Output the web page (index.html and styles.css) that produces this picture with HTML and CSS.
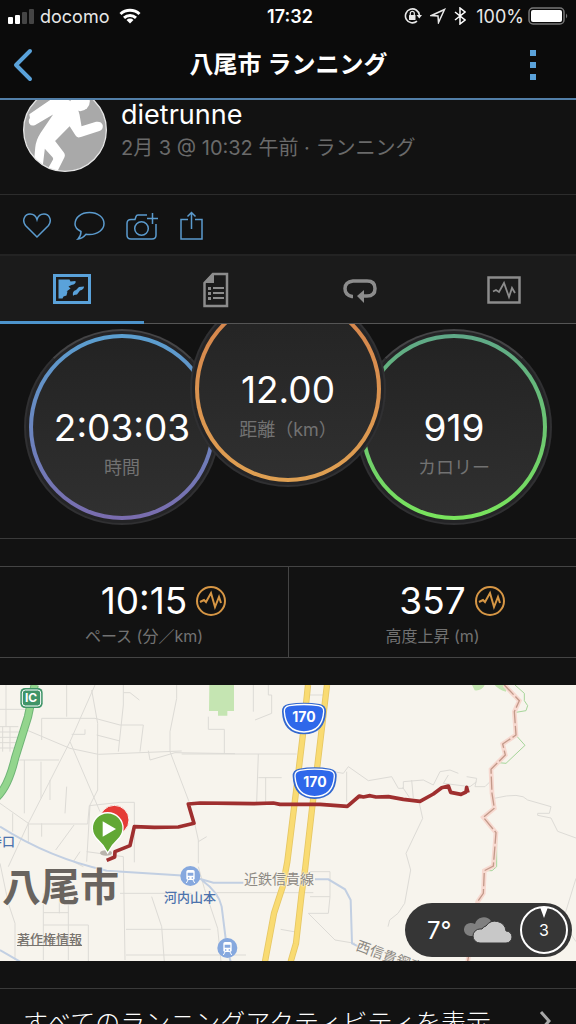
FILE: index.html
```html
<!DOCTYPE html>
<html lang="ja">
<head>
    <meta charset="UTF-8">
    <meta name="viewport" content="width=device-width, initial-scale=1.0">
    <title>八尾市 ランニング</title>
    <link rel="stylesheet" href="styles.css">
</head>
<body>

<!-- Status bar -->
<div class="status">
    <div class="status-left">
        <svg width="27" height="16" viewBox="0 0 27 16">
            <rect x="0" y="9" width="5" height="7" rx="1" fill="#fff"/>
            <rect x="7" y="7" width="5" height="9" rx="1" fill="#fff"/>
            <rect x="14" y="4" width="5" height="12" rx="1" fill="#454545"/>
            <rect x="21" y="1" width="5" height="15" rx="1" fill="#454545"/>
        </svg>
        <span class="carrier">docomo</span>
        <svg width="22" height="16" viewBox="0 0 22 16" fill="none" stroke="#fff" stroke-width="3">
            <path d="M1.5 6a14 14 0 0 1 19 0"/>
            <path d="M5 9.8a9 9 0 0 1 12 0"/>
            <path d="M11 15.5L7.5 12a5 5 0 0 1 7 0z" fill="#fff" stroke="none"/>
        </svg>
    </div>
    <b class="clock">17:32</b>
    <div class="status-right">
        <svg width="18" height="18" viewBox="0 0 18 18" fill="none" stroke="#e8e8e8" stroke-width="1.6">
            <path d="M13 14.2A7 7 0 1 1 15.4 8"/>
            <path d="M12.5 8H18l-2.7 3.5z" fill="#e8e8e8" stroke="none"/>
            <rect x="5" y="8" width="6.5" height="5" rx="0.5" fill="#e8e8e8" stroke="none"/>
            <path d="M6.3 8V6.300a2 2 0 0 1 4 0V8" stroke-width="1.2"/>
        </svg>
        <svg class="arrow" width="16" height="16" viewBox="0 0 16 16" fill="none" stroke="#e8e8e8" stroke-width="1.5">
            <path d="M14.5 1.5L1.5 7.5l6.5.5.5 6.5z"/>
        </svg>
        <svg class="bluetooth" width="12" height="18" viewBox="0 0 12 18" fill="none" stroke="#fff" stroke-width="1.5">
            <path d="M1 5l10 8-5 4V1l5 4-10 8"/>
        </svg>
        <span>100%</span>
        <svg width="40" height="18" viewBox="0 0 40 18">
            <rect x="1" y="1" width="35" height="16" rx="4" fill="none" stroke="#777" stroke-width="1.5"/>
            <rect x="3" y="3" width="31" height="12" rx="2" fill="#fff"/>
            <path d="M38 6.5q2.5 2.500 0 5z" fill="#777"/>
        </svg>
    </div>
</div>

<header class="topbar">
    <button class="back" aria-label="戻る">
        <svg width="20" height="34" viewBox="0 0 20 34" fill="none" stroke="#5aa2da" stroke-width="4" stroke-linecap="round" stroke-linejoin="round">
            <path d="M17 3L3 17l14 14"/>
        </svg>
    </button>
    <h1>八尾市 ランニング</h1>
    <button class="more" aria-label="メニュー">
        <svg width="6" height="32" viewBox="0 0 6 32" fill="#5aa2da">
            <rect width="6" height="6" y="1"/>
            <rect width="6" height="6" y="13"/>
            <rect width="6" height="6" y="25"/>
        </svg>
    </button>
</header>

<main>
    <section class="profile">
        <svg class="avatar" viewBox="15 -25 254 254">
            <defs>
                <clipPath id="round"><circle cx="142" cy="102" r="125"/></clipPath>
            </defs>
            <circle cx="142" cy="102" r="125" fill="#a9a9a9"/>
            <g clip-path="url(#round)" fill="#fff">
                <circle cx="188" cy="16" r="29"/>
                <path d="M34 54L96 12q10-6 22-6l30 4q32 8 38 46l6 35 44-14q16-2 20 10 2 14-10 18l-56 18q-12 4-16-4l-18-28-44 44 26 34q6 8 2 16l-26 52-26-14 17-30q3-6-2-10l-22-24-8 66-26-12 5-58q2-22 16-44l38-56-54 32q-12 5-18-5-4-10 2-16z"/>
            </g>
            <circle cx="142" cy="102" r="125" fill="none" stroke="#e6e6e6" stroke-width="4"/>
        </svg>
        <div>
            <div class="name">dietrunne</div>
            <div class="date">2月 3 @ 10:32 午前 · ランニング</div>
        </div>
    </section>

    <div class="actions">
        <button aria-label="いいね">
            <svg width="30" height="30" viewBox="0 0 30 30"><path d="M15 27L3.5 15.500C-.5 10 3 4 8 4c3.500 0 6 2 7 5.500C16 6 18.500 4 22 4c5 0 8.500 6 4.500 11.500z"/></svg>
        </button>
        <button aria-label="コメント">
            <svg width="32" height="30" viewBox="0 0 32 30"><path d="M8 21.5C4 19.500 2 17 2 14 2 7.500 8 2.500 16.500 2.500S31 7.500 31 13.500 25 24.500 16.500 24.500q-2 0-3.500-.3Q9.500 28.500 5 29q3-3 3-7.500z"/></svg>
        </button>
        <button aria-label="写真を追加">
            <svg width="32" height="30" viewBox="0 0 32 30">
                <path d="M21 5h-9q-1.500 0-2 1.500L9 9.500H5q-4 0-4 4V25q0 4 4 4h21q4 0 4-4V14"/>
                <circle cx="15.5" cy="18.5" r="6.8"/>
                <path d="M26.5 3v11M21 8.500h11"/>
            </svg>
        </button>
        <button aria-label="共有">
            <svg width="24" height="30" viewBox="0 0 24 30"><path d="M9 9.500H2V29h21V9.500h-7M12.500 19V2.500M8.500 6.500l4-4 4 4"/></svg>
        </button>
    </div>

    <nav class="tabs">
        <a href="#map" class="active" aria-label="地図">
            <svg width="38" height="30" viewBox="0 0 38 30">
                <rect x="1.5" y="1.5" width="35" height="27" fill="none" stroke="#5aa2da" stroke-width="3"/>
                <path d="M5.500 5.500h11l1 2 5-.5q1 3-4 4l-3 1.500 2 2-4 3h1l-1 4-3 1-1 2h-4zM20 22q-1-5 3-6l3-3 5-.5q0 3-4 4l-3 4-3 .5z" fill="#5aa2da"/>
            </svg>
        </a>
        <a href="#details" aria-label="詳細">
            <svg width="26" height="36" viewBox="0 0 26 36" fill="#8c8c8c">
                <path d="M10 2h14v32H1.500V11z" fill="none" stroke="#8c8c8c" stroke-width="2.5"/>
                <path d="M1 11L9 1.500h2V11z"/>
                <path d="M5 15h3v3H5zM10 15h11v2H10zM5 20h3v3H5zM10 20h11v2H10zM5 25h3v3H5zM10 25h11v2H10z"/>
            </svg>
        </a>
        <a href="#laps" aria-label="ラップ">
            <svg width="36" height="26" viewBox="0 0 36 26">
                <path d="M11 19.500h-1Q3 18 3 11.500T11 4h14q8 0 8 7.500T25 19h-4" fill="none" stroke="#8c8c8c" stroke-width="3.5"/>
                <path d="M15 19L22 13v13z" fill="#8c8c8c"/>
            </svg>
        </a>
        <a href="#charts" aria-label="グラフ">
            <svg width="34" height="28" viewBox="0 0 34 28" fill="none" stroke="#8c8c8c">
                <rect x="1.5" y="1.5" width="31" height="25" stroke-width="2.5"/>
                <path d="M6 15.500l3-1.500 3 2L17 7l5 14L25 12l3 5" stroke-width="1.8"/>
            </svg>
        </a>
    </nav>

    <section class="gauges">
        <div class="gauge blue">
            <div class="ring">
                <span class="value">2:03:03</span>
                <span class="label">時間</span>
            </div>
        </div>
        <div class="gauge orange">
            <div class="ring">
                <span class="value">12.00</span>
                <span class="label">距離（km）</span>
            </div>
        </div>
        <div class="gauge green">
            <div class="ring">
                <span class="value">919</span>
                <span class="label">カロリー</span>
            </div>
        </div>
    </section>

    <section class="stats">
        <div class="stat">
            <div class="stat-row">
                <span class="value">10:15</span>
                <svg class="pulse" viewBox="0 0 30 30"><circle cx="15" cy="15" r="14"/><path d="M4 16l4-2 2 2 5-9 4 14 4-10 2 6"/></svg>
            </div>
            <div class="label">ペース (分／km)</div>
        </div>
        <div class="stat">
            <div class="stat-row">
                <span class="value">357</span>
                <svg class="pulse" viewBox="0 0 30 30"><circle cx="15" cy="15" r="14"/><path d="M4 16l4-2 2 2 5-9 4 14 4-10 2 6"/></svg>
            </div>
            <div class="label">高度上昇 (m)</div>
        </div>
    </section>

    <section class="map" id="map">
        <svg class="map-canvas" viewBox="0 15 1728 828" preserveAspectRatio="xMinYMin slice" fill="none">
            <!-- parks -->
            <path d="M628 15h74v78h-20v14h-28V93h-27z" fill="#c5e5b2"/>
            <path d="M1416 15h38q-8 18-30 16zM1484 15h34v20q-20-4-34-20z" fill="#c5e5b2"/>

            <!-- small roads -->
            <g stroke="#dddbd6" stroke-width="3">
                <path d="M285 15L210 185 85 430 25 560M275 30l18 100v200l-23 45-10 170M210 185l90 210M80 150l130 55 85 18 250-10M0 88h90M200 15v95M18 15v125M0 140h55M0 156h60M0 172h60M0 188h60M0 204h60M30 140v75M8 140v75M125 180v-65h160l75 20h70l-10 80M370 15v60l-15 140M370 38h20l28 22M290 165l70 18M215 163h40v-15M55 240h122M73 240v160M123 245v110M200 320l-5 80M150 300v60"/>
                <path d="M530 15v40l-20 100v60l57 150M445 212l5 28 75-22 180 3M0 370l88 62h175l5-55 92-10h43v180M125 430v40M222 435l-55 75M38 400v55M85 430v60M260 515l110 15 5 310M0 550l25 120 20 60v110M130 640v200M178 640v60M205 640v200M265 735v110M130 698h75M130 735h135M360 640h215M378 748h254M378 825h360M455 650l30 90 8 105M240 515l-20 30 30 15"/>
                <path d="M625 110v38h48v74M545 222h345M775 222l-5 145M775 293h70M797 293v75M805 15v30h10v55l-50 20M760 15v80M585 435l10 45v70M595 485l25-15M595 560l18 65 40 120 10 100M650 638h290M930 650h60v-75h-60M925 700h60l5-50M925 700l80 80 60 10M842 748l45 8M930 45h40"/>
                <path d="M1000 275l30 5 15-20 60 42 70-12 20 35h15v-20l60-5 30 15 20-40 30-5 25 10M1040 365v-90M1258 370l10 45-50 105 14 50-18 100-20 30-25 20-5 20M1483 355q80-20 100 5l70 20-5 20h-35v6l40 8 20 40 55 20M1728 595l-40 130 40 60M1345 285l-15 25 80 10 20-15M1400 290l30 5-5 25h30l20-20M1208 322l20 30M1235 300l5 55"/>
            </g>

            <!-- railways -->
            <g stroke="#c2cfe2" stroke-width="6">
                <path d="M0 440q150 95 320 132l250 16 70 20h90M945 598h40l50 30 17 32 4 130 20 10M605 600q52 38 60 80l15 120 12 45M0 810l60 35"/>
            </g>

            <!-- expressway and route 170 -->
            <path d="M104 15L84 110 45 235Q25 320-10 352" stroke="#6fb476" stroke-width="25"/>
            <path d="M104 15L84 110 45 235Q25 320-10 352" stroke="#93d58d" stroke-width="19"/>
            <g stroke="#e6c765" stroke-width="19">
                <path d="M924 15l-16 155-18 150-28 225-14 75-26 80-27 145M981 15l-28 235-15 120-23 200-10 70-17 150-16 55"/>
            </g>
            <g stroke="#f9db72" stroke-width="14">
                <path d="M924 15l-16 155-18 150-28 225-14 75-26 80-27 145M981 15l-28 235-15 120-23 200-10 70-17 150-16 55"/>
            </g>

            <!-- prefecture border -->
            <path d="M1545 15l28 25v22l10 15-5 15-30 5M1550 168l25 28-57 54-22-2M1490 460v100l-14 12h-16" stroke="#a6d59a" stroke-width="3"/>
            <path d="M1513 15l45 47-15 33 5 70-40 27 8 33-43 43 3 72 7 45-33 27 38 46-8 100-27 14-3 68-17 25-30 180" stroke="#f7d9d0" stroke-width="14"/>
            <path d="M1513 15l45 47-15 33 5 70-40 27 8 33-43 43 3 72 7 45-33 27 38 46-8 100-27 14-3 68-17 25-30 180" stroke="#c49a8a" stroke-width="4" stroke-dasharray="40 8"/>

            <!-- run track -->
            <path d="M320 541L344 531 345 515 390 497 403 440 463 442 535 441 582 430 565 372 600 369 700 370 760 371 820 369 840 373 960 373 1042 379 1078 348 1090 351 1110 347 1128 351 1165 350 1210 358 1260 364 1300 342 1325 323 1345 318 1352 337 1383 343 1398 336 1400 322 1404 338" stroke="#9f2f2f" stroke-width="11" stroke-linejoin="round"/>

            <!-- finish and start pins -->
            <circle cx="343" cy="420" r="44" fill="#e53b36" stroke="#faf3ee" stroke-width="3"/>
            <ellipse cx="318" cy="519" rx="18" ry="8" fill="#b9b4ac"/>
            <path d="M323 519q-12-24-30-40a46 46 0 1 1 60 0q-18 16-30 40z" fill="#62a834" stroke="#fff" stroke-width="4"/>
            <path d="M308 424v46l40-23z" fill="#fff"/>

            <!-- stations -->
            <g id="station">
                <circle cx="571" cy="588" r="30" fill="#86a8de"/>
                <rect x="559" y="570" width="25" height="30" rx="5" fill="#fff"/>
                <path d="M563 578h17v9h-17zM564 592h4v4h-4zM575 592h4v4h-4z" fill="#86a8de"/>
                <path d="M564 600l-5 9M579 600l5 9" stroke="#fff" stroke-width="3"/>
            </g>
            <use href="#station" x="111" y="216"/>

            <!-- road shields -->
            <rect x="61" y="24" width="67" height="60" rx="14" fill="#3f9468"/>
            <rect x="67" y="30" width="55" height="48" rx="9" stroke="#fff" stroke-width="3"/>
            <g id="shield">
                <path d="M865 72q47-8 94 0 20 4 19 23-2 66-66 68-64-2-66-68-1-19 19-23z" fill="#3368cf"/>
                <path d="M868 77q44-7 88 0 16 3 15 18-4 60-59 61-55-1-59-61-1-15 15-18z" fill="#2f68ea" stroke="#fff" stroke-width="4"/>
            </g>
            <use href="#shield" x="32" y="194"/>
        </svg>

        <span class="place city">八尾市</span>
        <span class="place station-name kyuhoji">久宝寺口</span>
        <span class="place station-name yamamoto">河内山本</span>
        <span class="place line-name shigi">近鉄信貴線</span>
        <span class="place line-name cable">西信貴鋼索線</span>
        <span class="place sign ic">IC</span>
        <span class="place sign route-a">170</span>
        <span class="place sign route-b">170</span>
        <a class="legal" href="#legal">著作権情報</a>

        <div class="weather">
            <span class="temp">7°</span>
            <svg width="48" height="28" viewBox="0 0 48 28">
                <path d="M6 20a6 6 0 0 1 1-13q2 0 4 1a9 9 0 0 1 16-3l-8 10-8 5z" fill="#808080"/>
                <path d="M16 27a7 7 0 0 1 0-14l2 0a6 6 0 0 1 4-3 11 11 0 0 1 20 5 6 6 0 0 1 0 12z" fill="#c8c8c8" stroke="#363636"/>
            </svg>
            <div class="wind">
                <svg width="50" height="50" viewBox="0 0 50 50">
                    <circle cx="25" cy="25" r="23" fill="none" stroke="#fff" stroke-width="2"/>
                    <path d="M21 2h8l-4 11z" fill="#fff"/>
                </svg>
                <span>3</span>
            </div>
        </div>
    </section>

    <a class="all-link" href="#all">
        <span>すべてのランニングアクティビティを表示</span>
        <svg width="12" height="20" viewBox="0 0 12 20" fill="none" stroke="#a8a8a8" stroke-width="3"><path d="M2 1l8 9-8 9"/></svg>
    </a>
</main>

</body>
</html>
```
FILE: styles.css
```css
* {
    box-sizing: border-box;
}

body {
    margin: 0;
    height: 100vh;
    display: flex;
    flex-direction: column;
    overflow: hidden;
    background-color: #121212;
    color: white;
    font-family: Inter, "Noto Sans CJK JP", sans-serif;
}

svg { display: block; }

button {
    padding: 0;
    border: none;
    background: none;
    cursor: pointer;
}

/* Status bar */
.status {
    flex: none;
    display: grid;
    grid-template-columns: 1fr auto 1fr;
    align-items: center;
    height: 32px;
    padding: 0 8px;
    background-color: #0b0b0b;
    color: #e8e8e8;
    font-size: 18px;
}

.status-left, .status-right {
    display: flex;
    align-items: center;
    gap: 4px;
}

.status-left { gap: 5px; }
.status-right { justify-content: flex-end; }
.carrier { margin-right: 5px; }
.clock { padding-left: 4px; font-weight: 600; color: white; }
.arrow { margin: 0 4px; }
.bluetooth { margin-right: 6px; }

.topbar {
    flex: none;
    display: flex;
    align-items: center;
    justify-content: space-between;
    height: 68px;
    padding: 0 40px 0 13px;
    background-color: #0b0b0b;
    border-bottom: 2px solid #527fa8;
}

.topbar button { width: 20px; }
.topbar .more { width: 6px; }

h1 {
    margin: 0;
    padding-left: 14px;
    font-size: 24px;
    font-weight: 600;
    line-height: 36px;
}

main {
    flex: 1;
    overflow: hidden;
}

/* Profile */
.profile {
    display: flex;
    gap: 14px;
    height: 95px;
    padding-left: 23px;
    border-bottom: 1px solid #2c2c2c;
    overflow: hidden;
}

.avatar {
    width: 84px;
    height: 84px;
    margin-top: -12px;
}

.name {
    font-size: 27px;
    line-height: 30px;
}

.date {
    font-size: 20px;
    line-height: 36px;
    color: #6a6a6a;
}

.actions {
    display: flex;
    align-items: center;
    gap: 21px;
    height: 61px;
    padding-left: 22px;
    border-bottom: 2px solid #232323;
}

.actions svg {
    fill: none;
    stroke: #5b9bce;
    stroke-width: 1.5;
}

/* Tabs */
.tabs {
    display: grid;
    grid-template-columns: repeat(4, 1fr);
    height: 68px;
    background-color: #1b1b1b;
}

.tabs a {
    display: flex;
    align-items: center;
    justify-content: center;
    border-bottom: 1px solid #555555;
}

.tabs .active { border-bottom: 3px solid #4d94cc; }

/* Gauges */
.gauges {
    display: flex;
    justify-content: center;
    height: 215px;
    border-bottom: 1px solid #3a3a3a;
    overflow: hidden;
}

.gauge {
    flex: none;
    width: 196px;
    height: 196px;
    margin-top: 5px;
    padding: 3px;
    border: 2px solid #303032;
    border-top-color: #444446;
    border-radius: 50%;
    background-color: #242426;
}

.gauge.orange {
    position: relative;
    margin: -33px -30px 0;
}

.ring {
    display: flex;
    flex-direction: column;
    align-items: center;
    height: 186px;
    padding-top: 68px;
    border: 4px solid transparent;
    border-radius: 50%;
}

.blue .ring { background: linear-gradient(#232323, #303030) padding-box, linear-gradient(#5b9fd0, #7a6cae) border-box; }
.orange .ring { background: linear-gradient(#232323, #303030) padding-box, linear-gradient(#d5834c, #dfa052) border-box; }
.green .ring { background: linear-gradient(#232323, #303030) padding-box, linear-gradient(#5fa888, #79e45c) border-box; }

.value {
    font-size: 37px;
    line-height: 44px;
}

.label {
    font-size: 18px;
    line-height: 36px;
    color: #727272;
}

/* Pace and elevation */
.stats {
    display: grid;
    grid-template-columns: 1fr 1fr;
    height: 92px;
    margin: 27px 0;
    border-top: 1px solid #444444;
    border-bottom: 1px solid #444444;
}

.stat {
    padding-top: 12px;
    text-align: center;
}

.stat + .stat { border-left: 1px solid #444444; }

.stat-row {
    display: grid;
    grid-template-columns: 1fr auto 1fr;
    align-items: center;
}

.stat-row .value { grid-column: 2; }

.pulse {
    width: 30px;
    height: 30px;
    margin-left: 9px;
    fill: none;
    stroke: #d69645;
    stroke-width: 2;
}

.stat .label {
    font-size: 16px;
    line-height: 26px;
}

/* Map */
.map {
    position: relative;
    height: 276px;
    overflow: hidden;
    background-color: #f7f4ed;
}

.map-canvas {
    width: 100%;
    height: 100%;
}

.place {
    position: absolute;
    line-height: 20px;
    white-space: nowrap;
    text-shadow: 0 0 2px #f7f4ed, 0 0 2px #f7f4ed, 0 0 2px #f7f4ed;
}

.city {
    left: 2px;
    top: 182px;
    font-size: 39px;
    line-height: 40px;
    font-weight: 700;
    color: #69645f;
}

.station-name {
    font-size: 13px;
    font-weight: 500;
    color: #4d73ad;
}

.kyuhoji { left: -37px; top: 146px; }
.yamamoto { left: 164px; top: 202px; }

.line-name {
    font-size: 14px;
    color: #8d8983;
}

.shigi { left: 244px; top: 184px; }

.cable {
    left: 357px;
    top: 250px;
    transform: rotate(20deg);
    transform-origin: left center;
}

.sign {
    width: 42px;
    font-size: 14px;
    font-weight: 700;
    text-align: center;
    text-shadow: none;
}

.ic { left: 10px; top: 3px; font-size: 12px; }
.route-a { left: 283px; top: 22px; }
.route-b { left: 294px; top: 87px; }

.legal {
    position: absolute;
    left: 17px;
    bottom: 12px;
    font-size: 13px;
    font-weight: 500;
    line-height: 20px;
    color: #77736e;
}

.weather {
    position: absolute;
    right: 4px;
    bottom: 4px;
    display: flex;
    align-items: center;
    gap: 7px;
    height: 54px;
    padding: 0 3px 0 22px;
    border-radius: 27px;
    background-color: #363636;
}

.temp {
    width: 30px;
    font-size: 24px;
}

.wind { position: relative; }

.wind span {
    position: absolute;
    left: 0;
    top: 15px;
    width: 50px;
    text-align: center;
    font-size: 16px;
    line-height: 20px;
}

.all-link {
    display: flex;
    align-items: center;
    justify-content: space-between;
    height: 64px;
    margin-top: 27px;
    padding: 0 25px 0 23px;
    border-top: 1px solid #3a3a3a;
    color: white;
    font-size: 25px;
    font-weight: 300;
    text-decoration: none;
}
```
